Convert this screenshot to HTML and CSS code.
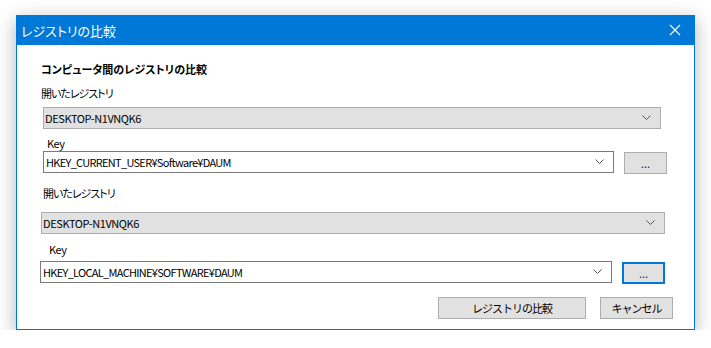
FILE: index.html
```html
<!DOCTYPE html>
<html lang="ja">
<head>
    <meta charset="UTF-8">
    <title>レジストリの比較</title>
    <link rel="stylesheet" href="styles.css">
</head>
<body>

    <div class="window">
        <!-- タイトルバー -->
        <div class="titlebar">
            <span class="title">レジストリの比較</span>
            <svg class="close" width="12" height="12" viewBox="0 0 12 12">
                <path d="M1 1 L11 11 M11 1 L1 11" stroke="#fff" stroke-width="1.1" fill="none"/>
            </svg>
        </div>

        <div class="content">
            <div class="heading">コンピュータ間のレジストリの比較</div>

            <div class="label jp label-1">開いたレジストリ</div>
            <div class="combo combo-1">
                <span>DESKTOP-N1VNQK6</span>
                <svg class="chevron" width="9" height="6" viewBox="0 0 9 6"><path d="M0.5 0.5 L4.5 4.5 L8.5 0.5" stroke="#555" fill="none"/></svg>
            </div>

            <div class="label key-1">Key</div>
            <div class="key-row row-1">
                <div class="input">
                    <span>HKEY_CURRENT_USER¥Software¥DAUM</span>
                    <svg class="chevron" width="9" height="6" viewBox="0 0 9 6"><path d="M0.5 0.5 L4.5 4.5 L8.5 0.5" stroke="#555" fill="none"/></svg>
                </div>
                <button class="btn dots">...</button>
            </div>

            <div class="label jp label-2">開いたレジストリ</div>
            <div class="combo combo-2">
                <span>DESKTOP-N1VNQK6</span>
                <svg class="chevron" width="9" height="6" viewBox="0 0 9 6"><path d="M0.5 0.5 L4.5 4.5 L8.5 0.5" stroke="#555" fill="none"/></svg>
            </div>

            <div class="label key-2">Key</div>
            <div class="key-row row-2">
                <div class="input">
                    <span>HKEY_LOCAL_MACHINE¥SOFTWARE¥DAUM</span>
                    <svg class="chevron" width="9" height="6" viewBox="0 0 9 6"><path d="M0.5 0.5 L4.5 4.5 L8.5 0.5" stroke="#555" fill="none"/></svg>
                </div>
                <button class="btn dots focused">...</button>
            </div>

            <div class="actions">
                <button class="btn jp compare">レジストリの比較</button>
                <button class="btn jp cancel">キャンセル</button>
            </div>
        </div>
    </div>

</body>
</html>
```

FILE: styles.css
```css
/* Colores */
:root {
    --azul: #0078d7;
    --gris: #e1e1e1;
    --borde: #adadad;
    --borde-input: #7a7a7a;
    --texto: #000;
}

body {
    margin: 0;
    background-color: #fff;
    font-family: "Noto Sans CJK JP", sans-serif;
    font-size: 11px;
    letter-spacing: -0.4px;
    color: var(--texto);
    font-feature-settings: "palt";
}

/* Texto japonés */
.jp {
    font-size: 11px;
    letter-spacing: -1px;
}

/* Ventana */
.window {
    margin: 15px 0 0 16px;
    width: 679px;
    height: 315px;
    box-sizing: border-box;
    border: 1px solid var(--azul);
    border-top: none;
    background-color: #fff;
    box-shadow: 0 5px 18px rgba(0, 0, 0, 0.3);
}

.titlebar {
    height: 30px;
    margin: 0 -1px;
    background-color: var(--azul);
    color: #fff;
    display: flex;
    align-items: center;
    justify-content: space-between;
    padding: 0 14px 0 5px;
}

.title {
    font-size: 13px;
    letter-spacing: 0;
}

.content {
    display: flex;
    flex-direction: column;
}

.heading {
    font-weight: bold;
    letter-spacing: 0;
    height: 16px;
    line-height: 16px;
    margin: 16px 0 0 24px;
}

.label {
    height: 16px;
    line-height: 16px;
}

.label-1 { margin: 8px 0 0 24px; }
.key-1 { margin: 6px 0 0 30px; }
.label-2 { margin: 11px 0 0 26px; }
.key-2 { margin: 7px 0 0 32px; }

/* Combos */
.combo,
.input {
    height: 22px;
    box-sizing: border-box;
    display: flex;
    align-items: center;
    justify-content: space-between;
    padding: 0 9px 0 1px;
}

.combo {
    background-color: var(--gris);
    border: 1px solid var(--borde);
}

.combo-1 {
    margin: 6px 0 0 26px;
    width: 618px;
}

.combo-2 {
    margin: 11px 0 0 24px;
    width: 624px;
}

.input {
    background-color: #fff;
    border: 1px solid var(--borde-input);
    width: 571px;
    padding-left: 2px;
    letter-spacing: -0.7px;
}

.key-row {
    display: flex;
    gap: 10px;
}

.row-1 { margin-left: 26px; }
.row-2 { margin: 4px 0 0 23px; }
.row-2 .input { width: 572px; }

/* Botones */
.btn {
    font-family: inherit;
    font-size: 11px;
    background-color: var(--gris);
    border: 1px solid var(--borde);
    height: 22px;
    padding: 0;
    color: var(--texto);
}

.dots {
    width: 43px;
    color: #1b1464;
    margin-top: 1px;
    letter-spacing: 0;
}

.focused {
    border: 2px solid var(--azul);
}

.actions {
    display: flex;
    justify-content: flex-end;
    gap: 14px;
    margin: 13px 21px 0 0;
}

.compare { width: 148px; }
.cancel { width: 73px; }
```
